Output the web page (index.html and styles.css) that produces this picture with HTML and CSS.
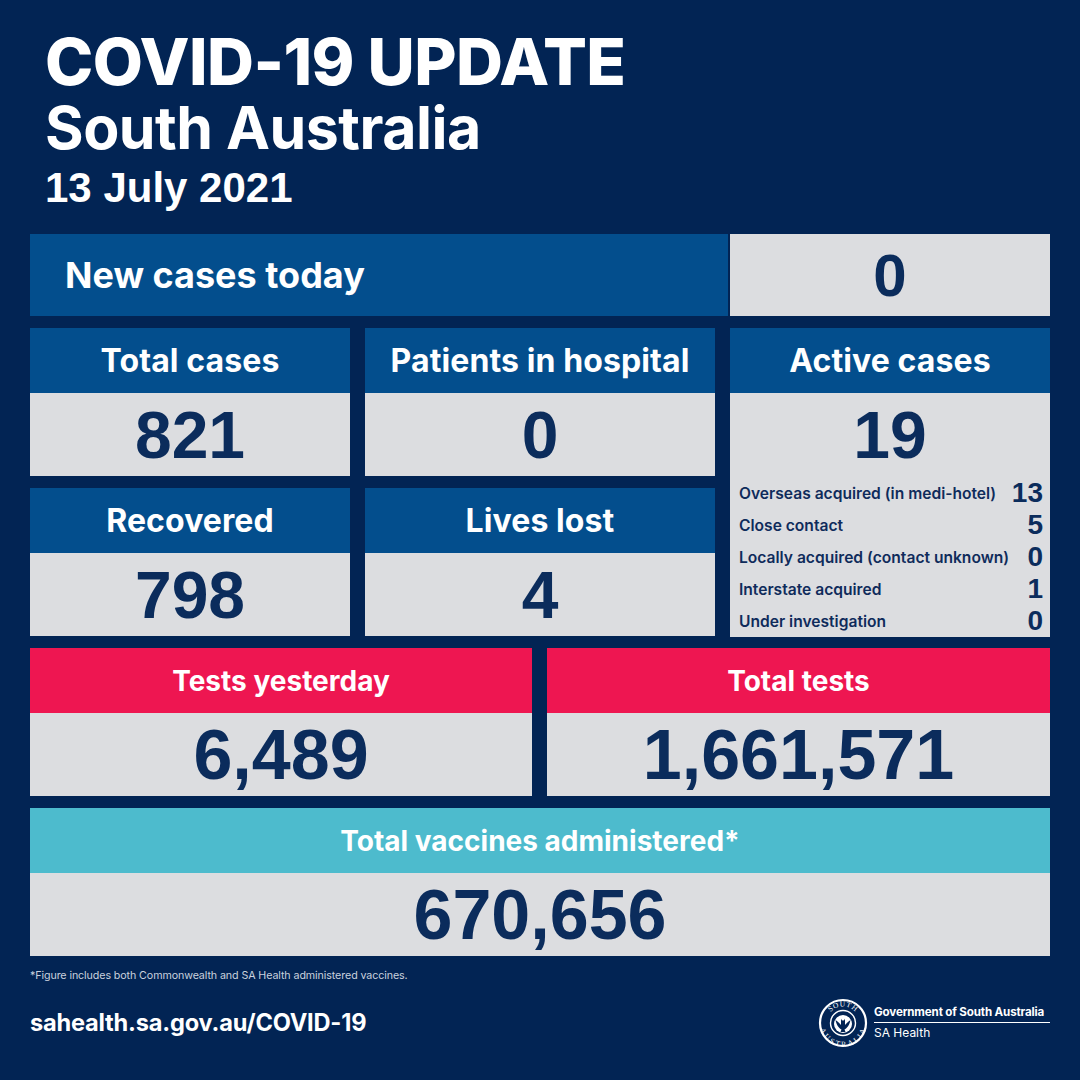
FILE: index.html
```html
<!DOCTYPE html>
<html lang="en">
<head>
<meta charset="utf-8">
<title>COVID-19 Update South Australia</title>
<link rel="stylesheet" href="styles.css">
</head>
<body>
<div class="page">
  <header class="head">
    <h1 class="title">COVID-19 UPDATE</h1>
    <h2 class="region">South Australia</h2>
    <p class="date">13 July 2021</p>
  </header>

  <section class="row-new">
    <div class="new-label">New cases today</div>
    <div class="new-value num">0</div>
  </section>

  <section class="grid-mid">
    <div class="card c-total">
      <div class="card-h blue">Total cases</div>
      <div class="card-v num">821</div>
    </div>
    <div class="card c-hosp">
      <div class="card-h blue">Patients in hospital</div>
      <div class="card-v num">0</div>
    </div>
    <div class="card c-active">
      <div class="card-h blue">Active cases</div>
      <div class="active-body">
        <div class="card-v num">19</div>
        <ul class="breakdown">
          <li><span>Overseas acquired (in medi-hotel)</span><b>13</b></li>
          <li><span>Close contact</span><b>5</b></li>
          <li><span>Locally acquired (contact unknown)</span><b>0</b></li>
          <li><span>Interstate acquired</span><b>1</b></li>
          <li><span>Under investigation</span><b>0</b></li>
        </ul>
      </div>
    </div>
    <div class="card c-rec">
      <div class="card-h blue">Recovered</div>
      <div class="card-v num">798</div>
    </div>
    <div class="card c-lost">
      <div class="card-h blue">Lives lost</div>
      <div class="card-v num">4</div>
    </div>
  </section>

  <section class="grid-tests">
    <div class="card">
      <div class="card-h red small">Tests yesterday</div>
      <div class="card-v num big">6,489</div>
    </div>
    <div class="card">
      <div class="card-h red small">Total tests</div>
      <div class="card-v num big">1,661,571</div>
    </div>
  </section>

  <section class="card vacc">
    <div class="card-h teal small">Total vaccines administered*</div>
    <div class="card-v num big">670,656</div>
  </section>

  <p class="footnote">*Figure includes both Commonwealth and SA Health administered vaccines.</p>

  <footer class="foot">
    <div class="url">sahealth.sa.gov.au/COVID-19</div>
    <div class="gov">
      <svg class="crest" width="50" height="50" viewBox="0 0 50 50" aria-hidden="true">
        <defs>
          <path id="arcTop" d="M8.5 25 A16.5 16.5 0 0 1 41.5 25"/>
          <path id="arcBot" d="M7 25 A18 18 0 0 0 43 25"/>
        </defs>
        <circle cx="25" cy="25" r="23" fill="none" stroke="#fff" stroke-width="2.2"/>
        <circle cx="25" cy="25" r="12.5" fill="none" stroke="#fff" stroke-width="1.4"/>
        <text class="crest-t"><textPath href="#arcTop" startOffset="50%" text-anchor="middle">SOUTH</textPath></text>
        <text class="crest-t"><textPath href="#arcBot" startOffset="50%" text-anchor="middle" dominant-baseline="hanging">AUSTRALIA</textPath></text>
        <circle cx="25" cy="26" r="9" fill="#fff"/>
        <path d="M17.5 22 C20 24 21.5 25 23 27 L23 21.5 C24 20 26 20 27 21.5 L27 27 C28.5 25 30 24 32.5 22 C31.5 27 29 30.5 26.5 31.5 L27.5 34 L22.5 34 L23.5 31.5 C21 30.5 18.5 27 17.5 22 Z" fill="#022454"/>
        <circle cx="25" cy="21" r="1.6" fill="#fff"/>
      </svg>
      <div class="gov-text">
        <div class="gov-name">Government of South Australia</div>
        <div class="gov-dept">SA Health</div>
      </div>
    </div>
  </footer>
</div>
</body>
</html>
```

FILE: styles.css
```css
* { box-sizing: border-box; }
html, body { margin: 0; padding: 0; }
body { background: #022454; }

.page {
  width: 1080px;
  height: 1080px;
  background: #022454;
  padding: 0 30px;
  font-family: "Inter", "Open Sans", sans-serif;
  color: #fff;
  display: flex;
  flex-direction: column;
}

.head {
  height: 234px;
  padding: 29px 0 0 15px;
}
.title {
  margin: 0;
  font-size: 65px;
  line-height: 65px;
  font-weight: 800;
  letter-spacing: -0.6px;
}
.region {
  margin: 3px 0 0;
  font-size: 59px;
  line-height: 62px;
  font-weight: 700;
  letter-spacing: -0.5px;
}
.date {
  margin: 6px 0 0;
  font-family: "Liberation Sans", Arial, sans-serif;
  font-weight: 700;
  font-size: 42px;
  line-height: 46px;
}

.num {
  font-family: "Liberation Sans", Arial, sans-serif;
  font-weight: 700;
  color: #0b2c5c;
}

.row-new {
  display: flex;
  gap: 2px;
  height: 82px;
}
.new-label {
  flex: 0 0 698px;
  background: #034e8d;
  display: flex;
  align-items: center;
  padding-left: 35px;
  font-size: 36px;
  font-weight: 700;
}
.new-value {
  flex: 1;
  background: #dcdde0;
  display: flex;
  align-items: center;
  justify-content: center;
  font-size: 60px;
}

.grid-mid {
  margin-top: 12px;
  display: grid;
  grid-template-columns: 320px 350px 320px;
  grid-template-rows: 148px 148px;
  column-gap: 15px;
  row-gap: 12px;
}
.c-active { grid-column: 3; grid-row: 1 / span 2; }

.card {
  display: flex;
  flex-direction: column;
}
.card-h {
  height: 65px;
  flex: 0 0 65px;
  display: flex;
  align-items: center;
  justify-content: center;
  font-size: 32px;
  font-weight: 700;
  letter-spacing: 0.1px;
}
.card-h.small {
  font-size: 28px;
  letter-spacing: 0;
}
.blue { background: #034e8d; }
.red { background: #ee1651; }
.teal { background: #4dbbcd; }

.card-v {
  flex: 1;
  background: #dcdde0;
  display: flex;
  align-items: center;
  justify-content: center;
  font-size: 66px;
  line-height: 1;
}
.card-v.big { font-size: 70px; }

.active-body {
  flex: 1;
  background: #dcdde0;
  display: flex;
  flex-direction: column;
}
.active-body .card-v { flex: 0 0 84px; }
.breakdown {
  list-style: none;
  margin: 0;
  padding: 0 7px 0 9px;
}
.breakdown li {
  height: 32px;
  display: flex;
  align-items: center;
  justify-content: space-between;
}
.breakdown span {
  font-size: 15.6px;
  font-weight: 600;
  color: #0f2b5b;
}
.breakdown b {
  font-family: "Liberation Sans", Arial, sans-serif;
  font-weight: 700;
  font-size: 28px;
  color: #0b2c5c;
}

.grid-tests {
  margin-top: 12px;
  display: grid;
  grid-template-columns: 502px 503px;
  column-gap: 15px;
  height: 148px;
}

.vacc {
  margin-top: 12px;
  height: 148px;
}

.footnote {
  margin: 13px 0 0;
  font-size: 10.7px;
  line-height: 14px;
  color: #c9d1de;
  letter-spacing: -0.1px;
}

.foot {
  flex: 1;
  display: flex;
  align-items: center;
  justify-content: space-between;
  padding-bottom: 18px;
}
.url {
  font-size: 23.6px;
  font-weight: 700;
  letter-spacing: -0.2px;
}
.gov {
  display: flex;
  align-items: center;
  gap: 6px;
}
.crest { display: block; }
.crest-t {
  font-family: "Liberation Serif", serif;
  font-size: 7.5px;
  fill: #fff;
  letter-spacing: 0.6px;
}
.gov-text { width: 176px; }
.gov-name {
  font-size: 11.6px;
  font-weight: 700;
  line-height: 14px;
  white-space: nowrap;
  padding-bottom: 3px;
  border-bottom: 1.5px solid #fff;
  letter-spacing: -0.15px;
}
.gov-dept {
  font-size: 12px;
  line-height: 16px;
  padding-top: 2px;
}
```
